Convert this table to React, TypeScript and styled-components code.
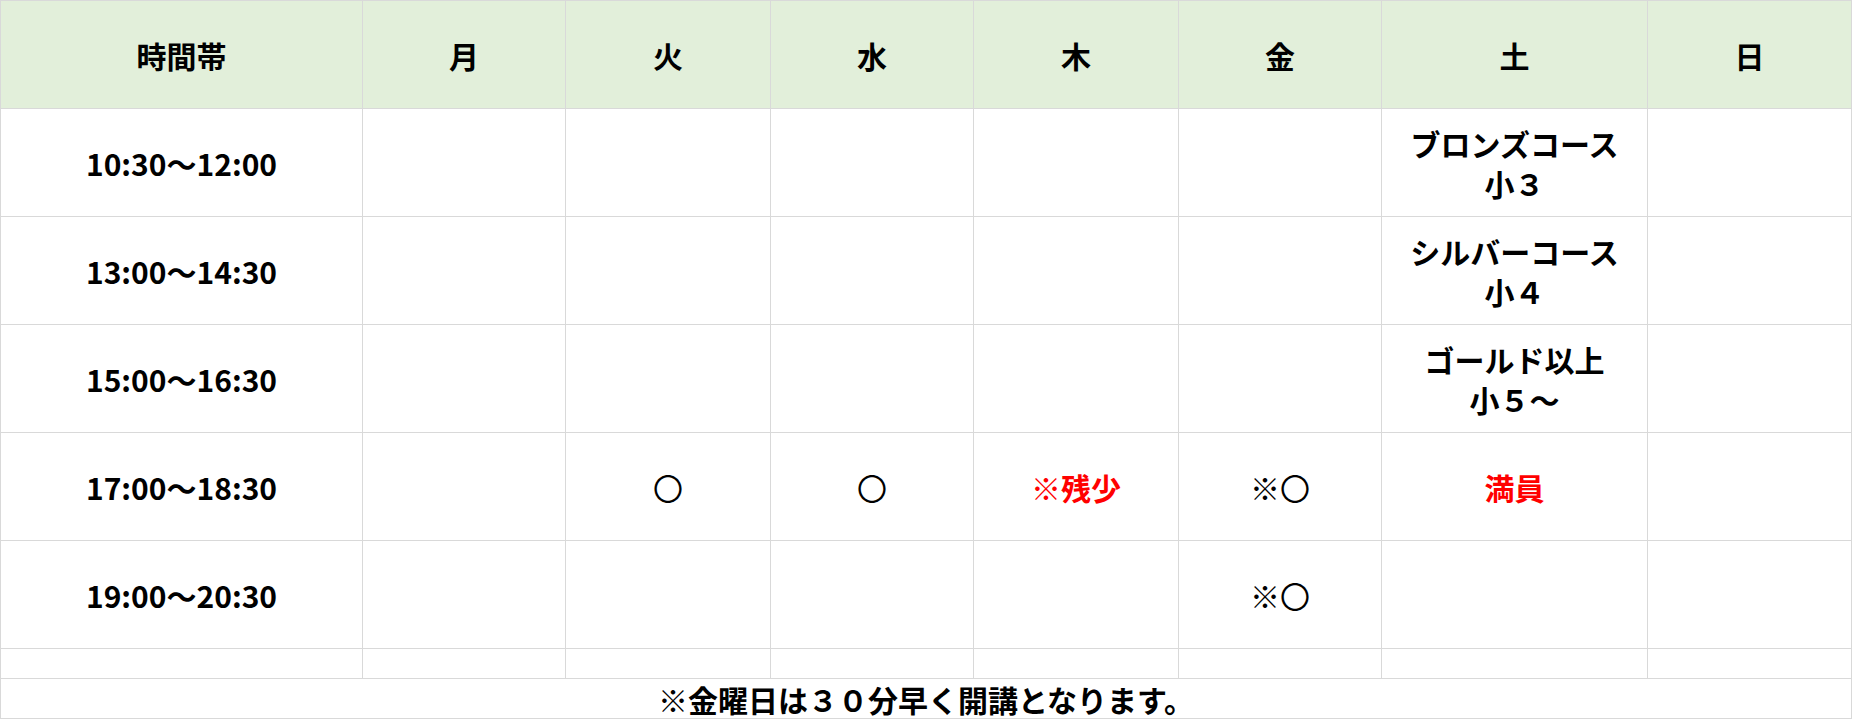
import React from "react";
import styled, { createGlobalStyle } from "styled-components";

const GlobalStyle = createGlobalStyle`
  html, body {
    margin: 0;
    padding: 0;
    background: #ffffff;
  }
  body {
    font-family: "Noto Sans CJK JP", "Noto Sans", sans-serif;
    color: #000000;
  }
`;

const colWidths = [362, 203, 205, 203, 205, 203, 266, 204];
const days = ["月", "火", "水", "木", "金", "土", "日"];

type Mark = { text: string; tone?: "red" | "plain" };

const rows: { time: string; cells: (Mark | string[] | null)[] }[] = [
  {
    time: "10:30〜12:00",
    cells: [null, null, null, null, null, ["ブロンズコース", "小３"], null],
  },
  {
    time: "13:00〜14:30",
    cells: [null, null, null, null, null, ["シルバーコース", "小４"], null],
  },
  {
    time: "15:00〜16:30",
    cells: [null, null, null, null, null, ["ゴールド以上", "小５〜"], null],
  },
  {
    time: "17:00〜18:30",
    cells: [
      null,
      { text: "〇", tone: "plain" },
      { text: "〇", tone: "plain" },
      { text: "※残少", tone: "red" },
      { text: "※〇", tone: "plain" },
      { text: "満員", tone: "red" },
      null,
    ],
  },
  {
    time: "19:00〜20:30",
    cells: [null, null, null, null, { text: "※〇", tone: "plain" }, null, null],
  },
];

const Sheet = styled.table`
  border-collapse: collapse;
  table-layout: fixed;
  width: 1852px;
  font-size: 30px;
  font-weight: 700;
`;

const HeadRow = styled.tr`
  height: 108px;
  background: #e2efda;
`;

const BodyRow = styled.tr<{ $h: number }>`
  height: ${(p) => p.$h}px;
`;

const HeadCell = styled.th`
  border: 1px solid #d9d9d9;
  text-align: center;
  vertical-align: middle;
  font-weight: 700;
  padding: 0;
`;

const Cell = styled.td`
  border: 1px solid #d9d9d9;
  text-align: center;
  vertical-align: middle;
  padding: 0;
  line-height: 40px;
  white-space: nowrap;
`;

const MarkText = styled.span<{ $tone: "red" | "plain" }>`
  color: ${(p) => (p.$tone === "red" ? "#ff0000" : "#000000")};
  font-weight: ${(p) => (p.$tone === "red" ? 700 : 400)};
`;

const Note = styled.td`
  border: 1px solid #d9d9d9;
  text-align: center;
  vertical-align: middle;
  padding: 0;
  line-height: 38px;
`;

export default function App() {
  return (
    <>
      <GlobalStyle />
      <Sheet>
        <colgroup>
          {colWidths.map((w, i) => (
            <col key={i} style={{ width: w }} />
          ))}
        </colgroup>
        <thead>
          <HeadRow>
            <HeadCell>時間帯</HeadCell>
            {days.map((d) => (
              <HeadCell key={d}>{d}</HeadCell>
            ))}
          </HeadRow>
        </thead>
        <tbody>
          {rows.map((r) => (
            <BodyRow key={r.time} $h={108}>
              <Cell>{r.time}</Cell>
              {r.cells.map((c, i) => (
                <Cell key={i}>
                  {Array.isArray(c)
                    ? c.map((line, j) => <div key={j}>{line}</div>)
                    : c
                    ? <MarkText $tone={c.tone || "plain"}>{c.text}</MarkText>
                    : null}
                </Cell>
              ))}
            </BodyRow>
          ))}
          <BodyRow $h={30}>
            {colWidths.map((_, i) => (
              <Cell key={i} />
            ))}
          </BodyRow>
          <BodyRow $h={40}>
            <Note colSpan={8}>※金曜日は３０分早く開講となります。</Note>
          </BodyRow>
        </tbody>
      </Sheet>
    </>
  );
}
